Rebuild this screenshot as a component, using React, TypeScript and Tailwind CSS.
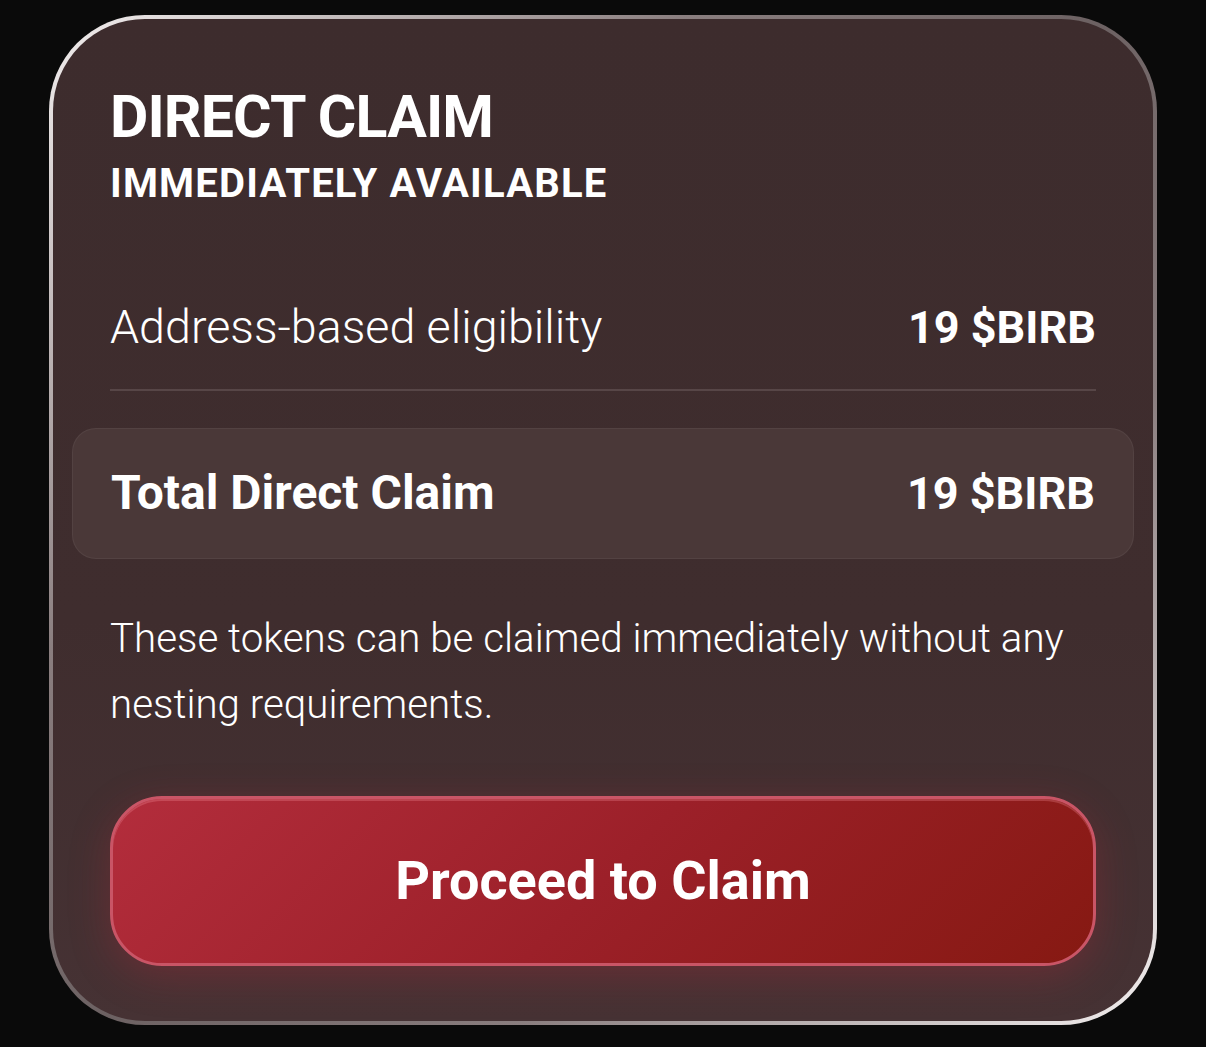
export default function App() {
  return (
    <div
      className="min-h-screen bg-[#0a0a0a] pl-[49px] pr-[49px] pt-[15px]"
      style={{ fontFamily: 'Roboto, "Noto Sans", sans-serif' }}
    >
      <div className="h-[1010px] w-[1108px] rounded-[96px] bg-[linear-gradient(135deg,#f4f0f0_0%,#8a7e7f_30%,#6c6162_50%,#8a7e7f_70%,#f4f0f0_100%)] p-[4px]">
        <div className="flex h-full flex-col rounded-[92px] bg-[linear-gradient(180deg,#3d2c2d_0%,#3f2d2e_60%,#463234_100%)] px-[57px] pt-[68px] text-white">
          <h1 className="text-[59px] font-bold leading-none tracking-[-0.015em]">DIRECT CLAIM</h1>
          <h2 className="mt-[18px] text-[40px] font-bold leading-none tracking-[0.03em]">IMMEDIATELY AVAILABLE</h2>

          <div className="mt-[100px] flex items-center justify-between">
            <span className="text-[46.6px] font-light leading-none">Address-based eligibility</span>
            <span className="text-[45px] font-bold leading-none">19 $BIRB</span>
          </div>
          <div className="mt-[38px] h-[2px] bg-[#574647]" />

          <div className="-mx-[38px] mt-[37px] flex h-[131px] items-center justify-between rounded-[24px] border border-white/5 bg-[#4a3838] px-[38px]">
            <span className="text-[48px] font-bold leading-none">Total Direct Claim</span>
            <span className="text-[45px] font-bold leading-none">19 $BIRB</span>
          </div>

          <p className="mt-[47px] text-[40.3px] font-light leading-[66px]">
            These tokens can be claimed immediately without any nesting requirements.
          </p>

          <button className="mt-[58px] h-[170px] rounded-[52px] border-[3px] border-[#c95566] bg-[linear-gradient(135deg,#b32d3c_0%,#9c2029_50%,#861912_100%)] text-[54px] font-bold text-white shadow-[0_10px_40px_rgba(190,40,55,0.3),inset_0_2px_0_rgba(255,160,170,0.25)]">
            Proceed to Claim
          </button>
        </div>
      </div>
    </div>
  );
}
